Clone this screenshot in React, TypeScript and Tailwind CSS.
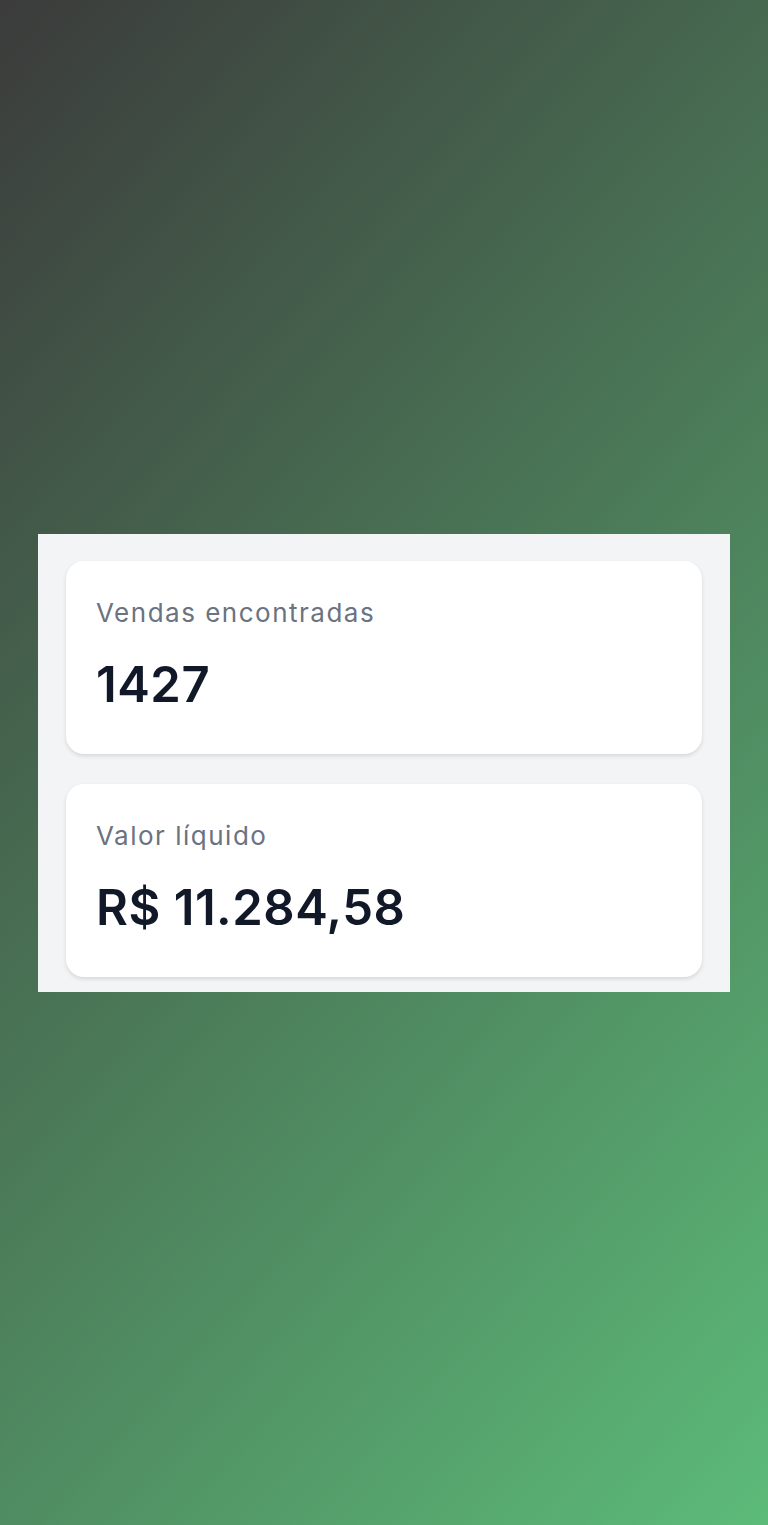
const stats = [
  { label: "Vendas encontradas", value: "1427" },
  { label: "Valor líquido", value: "R$ 11.284,58" },
];

export default function App() {
  return (
    <div
      className="min-h-screen flex items-center px-[38px] bg-linear-[132deg] from-[#3b3b3b] via-[#4b7a58] to-[#5cbb79]"
      style={{ fontFamily: "Inter, 'Noto Sans', sans-serif" }}
    >
      <div className="w-full bg-[#f3f4f6] px-[28px] pt-[27px] pb-[15px] flex flex-col gap-[30px]">
        {stats.map((s) => (
          <div
            key={s.label}
            className="h-[193px] bg-white rounded-[18px] shadow-[0_2px_4px_rgba(0,0,0,0.12)] px-[30px] pt-[36px]"
          >
            <p className="text-[26px] leading-[32px] text-[#6b7280] tracking-[1.5px]">{s.label}</p>
            <p className="mt-[28px] text-[49px] leading-[56px] font-semibold text-[#111827] tracking-[0.5px]">
              {s.value}
            </p>
          </div>
        ))}
      </div>
    </div>
  );
}
